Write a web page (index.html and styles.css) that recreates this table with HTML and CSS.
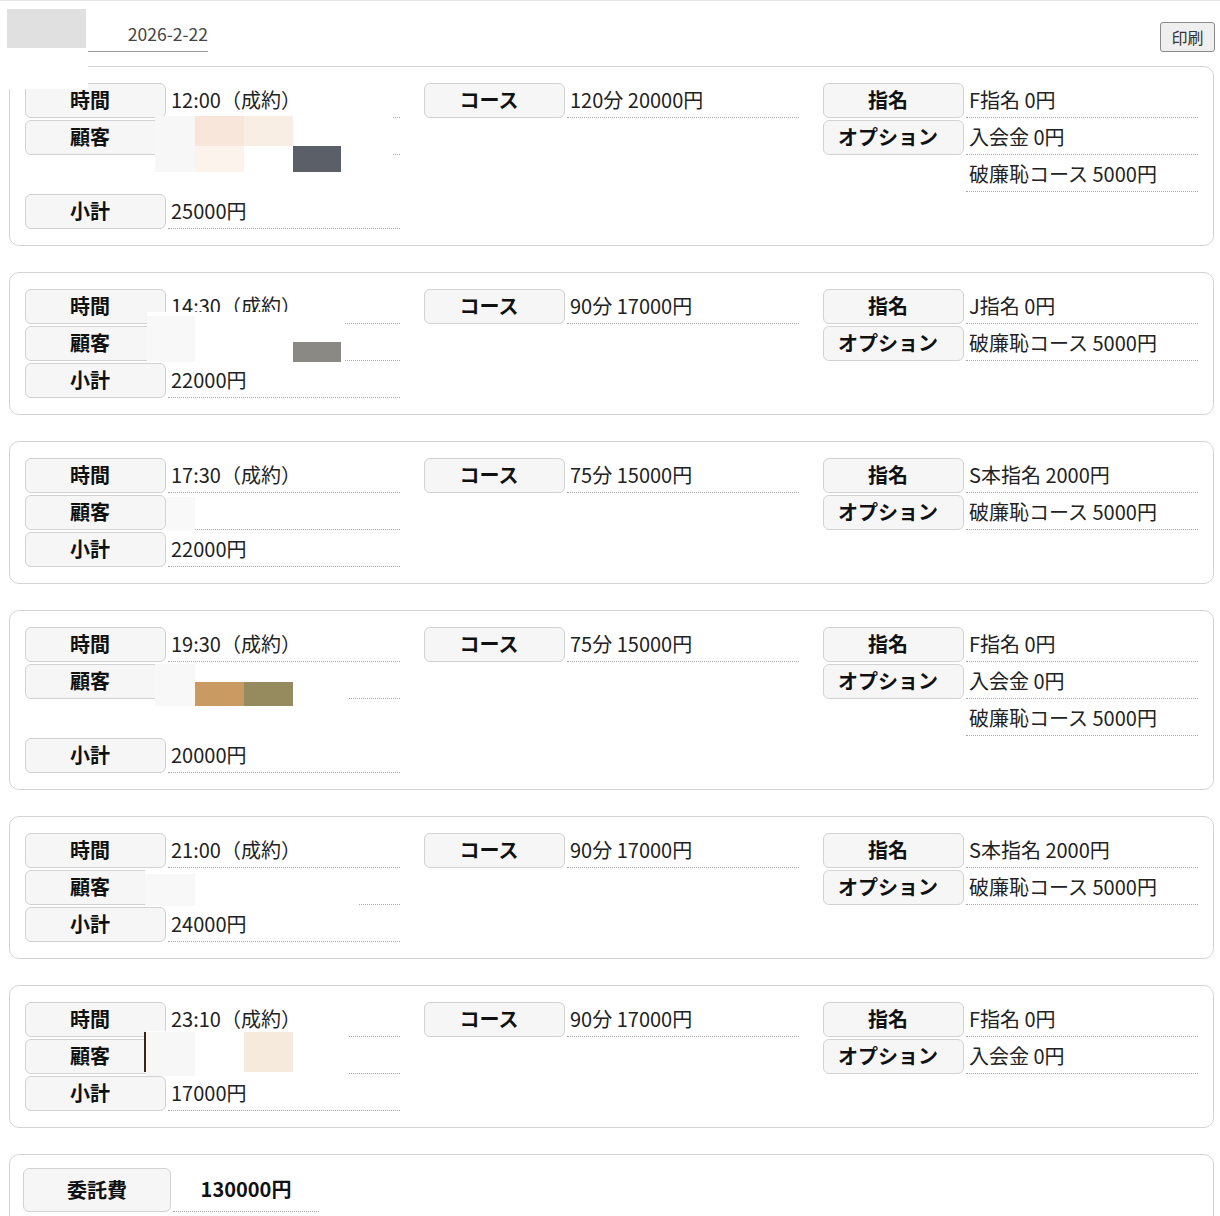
FILE: index.html
```html
<!DOCTYPE html>
<html lang="ja">
<head>
<meta charset="utf-8">
<title>日報</title>
<link rel="stylesheet" href="styles.css">
</head>
<body>
<div class="page">
  <header class="top">
    <div class="title-mask"></div>
    <div class="date">2026-2-22</div>
    <button class="print" type="button">印刷</button>
  </header>
  <div class="mask corner-mask"></div>

  <section class="card">
    <div class="upper">
      <div class="col">
        <div class="row"><div class="lbl">時間</div><div class="val">12:00（成約）</div></div>
        <div class="row"><div class="lbl">顧客</div><div class="val"></div></div>
      </div>
      <div class="col">
        <div class="row"><div class="lbl">コース</div><div class="val">120分 20000円</div></div>
      </div>
      <div class="col">
        <div class="row"><div class="lbl">指名</div><div class="val">F指名 0円</div></div>
        <div class="row"><div class="lbl">オプション</div><div class="val">入会金 0円</div></div>
        <div class="row"><div class="lbl blank"></div><div class="val">破廉恥コース 5000円</div></div>
      </div>
    </div>
    <div class="row"><div class="lbl">小計</div><div class="val">25000円</div></div>
    <div class="mask m1-white"></div>
    <div class="mask m1-a"></div>
    <div class="mask m1-b"></div>
    <div class="mask m1-c"></div>
    <div class="mask m1-d"></div>
    <div class="mask m1-e"></div>
  </section>

  <section class="card">
    <div class="upper">
      <div class="col">
        <div class="row"><div class="lbl">時間</div><div class="val">14:30（成約）</div></div>
        <div class="row"><div class="lbl">顧客</div><div class="val"></div></div>
      </div>
      <div class="col">
        <div class="row"><div class="lbl">コース</div><div class="val">90分 17000円</div></div>
      </div>
      <div class="col">
        <div class="row"><div class="lbl">指名</div><div class="val">J指名 0円</div></div>
        <div class="row"><div class="lbl">オプション</div><div class="val">破廉恥コース 5000円</div></div>
      </div>
    </div>
    <div class="row"><div class="lbl">小計</div><div class="val">22000円</div></div>
    <div class="mask m2-white"></div>
    <div class="mask m2-a"></div>
    <div class="mask m2-b"></div>
  </section>

  <section class="card">
    <div class="upper">
      <div class="col">
        <div class="row"><div class="lbl">時間</div><div class="val">17:30（成約）</div></div>
        <div class="row"><div class="lbl">顧客</div><div class="val"></div></div>
      </div>
      <div class="col">
        <div class="row"><div class="lbl">コース</div><div class="val">75分 15000円</div></div>
      </div>
      <div class="col">
        <div class="row"><div class="lbl">指名</div><div class="val">S本指名 2000円</div></div>
        <div class="row"><div class="lbl">オプション</div><div class="val">破廉恥コース 5000円</div></div>
      </div>
    </div>
    <div class="row"><div class="lbl">小計</div><div class="val">22000円</div></div>
    <div class="mask m3-a"></div>
  </section>

  <section class="card">
    <div class="upper">
      <div class="col">
        <div class="row"><div class="lbl">時間</div><div class="val">19:30（成約）</div></div>
        <div class="row"><div class="lbl">顧客</div><div class="val"></div></div>
      </div>
      <div class="col">
        <div class="row"><div class="lbl">コース</div><div class="val">75分 15000円</div></div>
      </div>
      <div class="col">
        <div class="row"><div class="lbl">指名</div><div class="val">F指名 0円</div></div>
        <div class="row"><div class="lbl">オプション</div><div class="val">入会金 0円</div></div>
        <div class="row"><div class="lbl blank"></div><div class="val">破廉恥コース 5000円</div></div>
      </div>
    </div>
    <div class="row"><div class="lbl">小計</div><div class="val">20000円</div></div>
    <div class="mask m4-white"></div>
    <div class="mask m4-a"></div>
    <div class="mask m4-b"></div>
    <div class="mask m4-c"></div>
  </section>

  <section class="card">
    <div class="upper">
      <div class="col">
        <div class="row"><div class="lbl">時間</div><div class="val">21:00（成約）</div></div>
        <div class="row"><div class="lbl">顧客</div><div class="val"></div></div>
      </div>
      <div class="col">
        <div class="row"><div class="lbl">コース</div><div class="val">90分 17000円</div></div>
      </div>
      <div class="col">
        <div class="row"><div class="lbl">指名</div><div class="val">S本指名 2000円</div></div>
        <div class="row"><div class="lbl">オプション</div><div class="val">破廉恥コース 5000円</div></div>
      </div>
    </div>
    <div class="row"><div class="lbl">小計</div><div class="val">24000円</div></div>
    <div class="mask m5-white"></div>
    <div class="mask m5-a"></div>
  </section>

  <section class="card">
    <div class="upper">
      <div class="col">
        <div class="row"><div class="lbl">時間</div><div class="val">23:10（成約）</div></div>
        <div class="row"><div class="lbl">顧客</div><div class="val"></div></div>
      </div>
      <div class="col">
        <div class="row"><div class="lbl">コース</div><div class="val">90分 17000円</div></div>
      </div>
      <div class="col">
        <div class="row"><div class="lbl">指名</div><div class="val">F指名 0円</div></div>
        <div class="row"><div class="lbl">オプション</div><div class="val">入会金 0円</div></div>
      </div>
    </div>
    <div class="row"><div class="lbl">小計</div><div class="val">17000円</div></div>
    <div class="mask m6-white"></div>
    <div class="mask m6-a"></div>
    <div class="mask m6-b"></div>
    <div class="mask m6-c"></div>
  </section>

  <section class="card total">
    <div class="row"><div class="lbl">委託費</div><div class="val">130000円</div></div>
  </section>
</div>
</body>
</html>
```

FILE: styles.css
```css
html, body {
  margin: 0;
  padding: 0;
  background: #fff;
}

body {
  font-family: "Noto Sans CJK JP", "Noto Sans", sans-serif;
  color: #222;
}

.page {
  position: relative;
  border-top: 1px solid #e6e6e6;
}

.top {
  height: 65px;
  box-sizing: border-box;
  padding-top: 8px;
  display: flex;
  align-items: flex-start;
}

.title-mask {
  margin-left: 7px;
  width: 79px;
  height: 39px;
  background: #e0e0e0;
}

.date {
  margin-top: 13px;
  width: 122px;
  height: 29px;
  border-bottom: 1px solid #9a9a9a;
  text-align: right;
  font-size: 17.5px;
  line-height: 24px;
  color: #444;
}

.print {
  margin: 13px 5px 0 auto;
  width: 55px;
  height: 30px;
  padding: 0;
  font-family: "Noto Sans CJK JP", sans-serif;
  font-size: 16px;
  color: #333;
  background: #efefef;
  border: 1px solid #8a8a8a;
  border-radius: 3px;
}

.card {
  position: relative;
  display: flex;
  flex-direction: column;
  gap: 2px;
  margin: 0 6px 26px 9px;
  padding: 16px 15px;
  border: 1px solid #d4d4d4;
  border-radius: 10px;
}

.upper {
  display: flex;
  gap: 24px;
}

.col {
  display: flex;
  flex-direction: column;
  gap: 2px;
  width: 375px;
}

.row {
  display: flex;
  gap: 2px;
  width: 375px;
}

.lbl {
  width: 141px;
  height: 35px;
  box-sizing: border-box;
  padding-right: 11px;
  border: 1px solid #d2d2d2;
  border-radius: 6px;
  background: #f6f6f6;
  font-size: 20px;
  font-weight: bold;
  line-height: 32px;
  text-align: center;
  color: #111;
}

.lbl.blank {
  border-color: transparent;
  background: transparent;
}

.val {
  width: 232px;
  height: 35px;
  box-sizing: border-box;
  border-bottom: 1px dotted #a8a8a8;
  padding-left: 3px;
  font-size: 20px;
  line-height: 33px;
  color: #222;
  white-space: nowrap;
}

.card.total {
  padding: 13px 15px 13px 13px;
}

.card.total .lbl {
  width: 148px;
  height: 44px;
  padding-right: 0;
  line-height: 41px;
}

.card.total .val {
  width: 146px;
  height: 44px;
  padding-left: 0;
  text-align: center;
  font-weight: bold;
  line-height: 41px;
  color: #111;
}

/* privacy redaction blocks laid over the content */
.mask {
  position: absolute;
  z-index: 2;
  background: #fff;
}

.corner-mask { left: 0; top: 48px; width: 88px; height: 40px; }

.m1-white { left: 145px; top: 49px; width: 237px; height: 56px; }
.m1-a { left: 145px; top: 49px; width: 40px; height: 56px; background: #f7f7f7; }
.m1-b { left: 185px; top: 49px; width: 49px; height: 30px; background: #f8e6da; }
.m1-c { left: 234px; top: 49px; width: 49px; height: 30px; background: #f8eee4; }
.m1-d { left: 185px; top: 79px; width: 49px; height: 26px; background: #fbf3ec; }
.m1-e { left: 283px; top: 79px; width: 48px; height: 26px; background: #5b5f68; }

.m2-white { left: 137px; top: 39px; width: 198px; height: 50px; }
.m2-a { left: 137px; top: 43px; width: 48px; height: 46px; background: #f8f8f8; }
.m2-b { left: 283px; top: 69px; width: 48px; height: 20px; background: #8b8984; }

.m3-a { left: 156px; top: 55px; width: 29px; height: 34px; background: #f9f9f9; }

.m4-white { left: 145px; top: 52px; width: 193px; height: 44px; }
.m4-a { left: 145px; top: 53px; width: 40px; height: 42px; background: #f8f8f8; }
.m4-b { left: 185px; top: 71px; width: 49px; height: 24px; background: #c99a62; }
.m4-c { left: 234px; top: 71px; width: 49px; height: 24px; background: #968a5f; }

.m5-white { left: 135px; top: 52px; width: 213px; height: 38px; }
.m5-a { left: 135px; top: 57px; width: 50px; height: 32px; background: #f8f8f8; }

.m6-white { left: 136px; top: 45px; width: 202px; height: 45px; }
.m6-a { left: 136px; top: 46px; width: 49px; height: 44px; background: #f7f7f7; }
.m6-b { left: 234px; top: 46px; width: 49px; height: 40px; background: #f6eadd; }
.m6-c { left: 134px; top: 46px; width: 2px; height: 40px; background: #3b2614; }
```
